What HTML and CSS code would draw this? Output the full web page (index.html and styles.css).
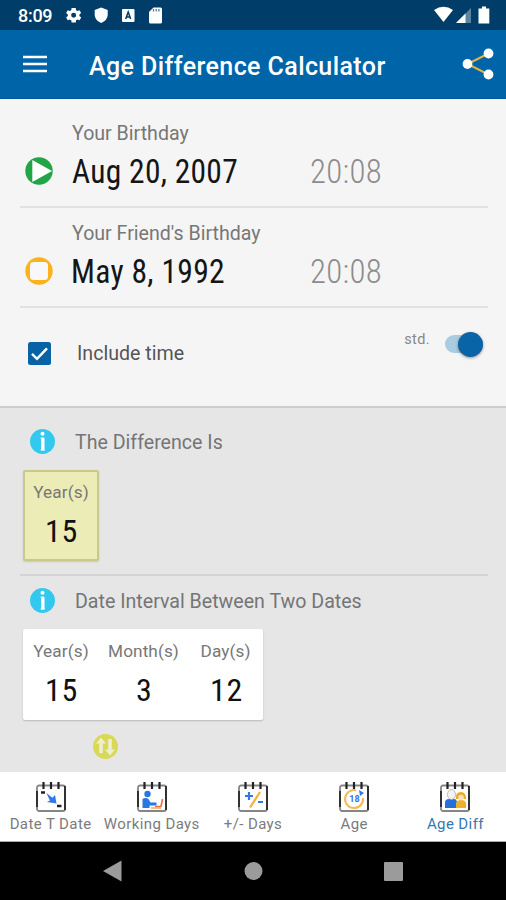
FILE: index.html
```html
<!DOCTYPE html>
<html lang="en">
<head>
<meta charset="utf-8">
<title>Age Difference Calculator</title>
<link rel="stylesheet" href="styles.css">
</head>
<body>
<svg width="0" height="0" class="defs" aria-hidden="true">
  <symbol id="calendar" viewBox="0 0 32 32">
    <rect x="2" y="4.500" width="28" height="25.500" rx="2" fill="#fff" stroke="#858585" stroke-width="1.800"/>
    <path d="M30 5v24M2 10v16" stroke="#222" stroke-width="1.700"/>
    <path d="M8.500 1v7M16 1v7M23.500 1v7" stroke="#222" stroke-width="2.200"/>
  </symbol>
  <symbol id="info" viewBox="0 0 25 25">
    <circle cx="12.500" cy="12.500" r="12.500" fill="#33c9ee"/>
    <circle cx="12.500" cy="4.800" r="2" fill="#fff"/>
    <path d="M10.500 9.200h3.500v11.800M10.500 21h4.500" fill="none" stroke="#d5f3fa" stroke-width="1"/>
    <path d="M12.700 8.700v12.800" stroke="#fff" stroke-width="3"/>
  </symbol>
</svg>
<header>
  <div class="status">
    <span class="clock">8:09</span>
    <svg width="102" height="20" viewBox="0 0 102 20" fill="#fff">
      <g transform="translate(-1.700 .3) scale(.83)"><path d="M19.400 13a7.500 7.500 0 0 0 0-2l2.100-1.600-2-3.500-2.500 1a7.300 7.300 0 0 0-1.700-1L15 3.200h-5l-.4 2.700a7.300 7.300 0 0 0-1.700 1l-2.500-1-2 3.500L5.500 11a7.500 7.500 0 0 0 0 2l-2.100 1.600 2 3.500 2.500-1a7.300 7.300 0 0 0 1.700 1l.4 2.700h5l.4-2.700a7.300 7.300 0 0 0 1.700-1l2.500 1 2-3.500zM12.500 15a3 3 0 1 1 0-6 3 3 0 0 1 0 6z"/></g>
      <path d="M36.200 2.500l6.500 2.600v4.400c0 4-2.700 7-6.500 8.500-3.800-1.500-6.500-4.500-6.500-8.500V5.100z"/>
      <rect x="57" y="4" width="12.500" height="13" rx="1"/>
      <path d="M60.700 14l2.500-7 2.500 7M61.700 12h3" fill="none" stroke="#003d69" stroke-width="1.500"/>
      <path d="M88.500 2.500h7q1.500 0 1.500 1.500v13q0 1.500-1.500 1.500h-10q-1.500 0-1.500-1.500V7z"/>
      <path d="M88.500 4v2.500M91.200 4v2.500M93.900 4v2.500" stroke="#48708f" stroke-width="1.200"/>
    </svg>
    <svg class="signals" width="62" height="20" viewBox="0 0 62 20" fill="#fff">
      <path d="M-3 5Q6.500-1.500 16 5L6.500 17z"/>
      <path d="M19 18L34 3v15z" fill="#5d849f"/><path d="M19 18L28.500 8.500V18z"/>
      <path d="M45 1.500h4v2h3.300V18.500h-10.800V3.500h3.500z"/>
    </svg>
  </div>
  <div class="appbar">
    <svg width="24" height="18" viewBox="0 0 24 18"><path d="M0 2h24M0 9h24M0 16h24" stroke="#fff" stroke-width="2.600"/></svg>
    <h1>Age Difference Calculator</h1>
    <svg class="share" width="32" height="32" viewBox="0 0 32 32"><path d="M26.500 5.500L5.500 16l21 10.500" fill="none" stroke="#e5b344" stroke-width="2"/><g fill="#fff"><circle cx="26.500" cy="5.500" r="4.900"/><circle cx="5.500" cy="16" r="4.900"/><circle cx="26.500" cy="26.500" r="4.900"/></g></svg>
  </div>
</header>
<main>
  <section class="inputs">
    <div class="date-row">
      <svg class="marker" width="28" height="28" viewBox="0 0 28 28"><circle cx="14" cy="14" r="13.700" fill="#21a547"/><path d="M7.300 3v22L27 14z" fill="#fff"/></svg>
      <div class="fields">
        <p class="label">Your Birthday</p>
        <svg class="values" width="340" height="40"><text x="0" y="32" textLength="166" lengthAdjust="spacingAndGlyphs">Aug 20, 2007</text><text class="time" x="238" y="32" textLength="72" lengthAdjust="spacingAndGlyphs">20:08</text></svg>
      </div>
    </div>
    <div class="date-row">
      <svg class="marker" width="28" height="28" viewBox="0 0 28 28"><circle cx="14" cy="14" r="13.700" fill="#fbb31b"/><rect x="5" y="5" width="18" height="18" rx="3.500" fill="#f8f8fa"/></svg>
      <div class="fields">
        <p class="label">Your Friend's Birthday</p>
        <svg class="values" width="340" height="40"><text x="-1" y="32" textLength="154" lengthAdjust="spacingAndGlyphs">May 8, 1992</text><text class="time" x="238" y="32" textLength="72" lengthAdjust="spacingAndGlyphs">20:08</text></svg>
      </div>
    </div>
    <div class="options">
      <svg width="23" height="23" viewBox="0 0 23 23"><rect width="23" height="23" rx="2.500" fill="#0962a4"/><path d="M4 11.800l5 5L19 6.300" fill="none" stroke="#fff" stroke-width="2.500"/></svg>
      <span class="include">Include time</span>
      <span class="std">std.</span>
      <span class="switch"><i></i></span>
    </div>
  </section>
  <section class="results">
    <div class="heading"><svg width="25" height="25"><use href="#info"/></svg><h2>The Difference Is</h2></div>
    <div class="card highlight">
      <div class="unit"><span>Year(s)</span><svg width="60" height="40"><text x="14" y="34" textLength="33" lengthAdjust="spacingAndGlyphs">15</text></svg></div>
    </div>
    <div class="divider"></div>
    <div class="heading second"><svg width="25" height="25"><use href="#info"/></svg><h2>Date Interval Between Two Dates</h2></div>
    <div class="card">
      <div class="unit"><span>Year(s)</span><svg width="60" height="40"><text x="14" y="34" textLength="33" lengthAdjust="spacingAndGlyphs">15</text></svg></div>
      <div class="unit"><span>Month(s)</span><svg width="60" height="40"><text x="22" y="34" textLength="16.500" lengthAdjust="spacingAndGlyphs">3</text></svg></div>
      <div class="unit"><span>Day(s)</span><svg width="60" height="40"><text x="14" y="34" textLength="33" lengthAdjust="spacingAndGlyphs">12</text></svg></div>
    </div>
    <svg class="swap" width="25" height="25" viewBox="0 0 25 25"><circle cx="12.500" cy="12.500" r="12.500" fill="#d8d956"/><path d="M8 3.500l5 6H9.800V19H6.200V9.500H3zM17 21.500l-5-6h3.200V5h3.600v10.500H22z" fill="#eeeed0"/></svg>
  </section>
</main>
<nav class="tabs">
  <a><svg width="32" height="32" viewBox="0 0 32 32"><use href="#calendar"/><path d="M6 11.500h4M22 25h4.500" stroke="#222" stroke-width="2.500"/><path d="M21.500 22.500l-1.500-8.500-2.600 2.700-6-4.700 3.500 7.500-3 1.500z" fill="#2e78ea"/></svg><span>Date T Date</span></a>
  <a><svg width="32" height="32" viewBox="0 0 32 32"><use href="#calendar"/><circle cx="11.500" cy="13" r="3.200" fill="#2878e4"/><path d="M6.500 18q3-2 6 0l2 3.500h6v3h-7v2.500h-7z" fill="#2878e4"/><path d="M19 25.500h6l1.500-7.500" fill="none" stroke="#ef6b43" stroke-width="1.600"/><path d="M15 27h10" stroke="#f5ad52" stroke-width="1.500"/></svg><span>Working Days</span></a>
  <a><svg width="32" height="32" viewBox="0 0 32 32"><use href="#calendar"/><path d="M8 15h8M12 11v8M21 21h5" stroke="#3676e8" stroke-width="2.200"/><path d="M13 26.500L23 11" stroke="#f6b13f" stroke-width="2.300"/></svg><span>+/- Days</span></a>
  <a><svg width="32" height="32" viewBox="0 0 32 32"><use href="#calendar"/><path d="M18 9.300A9 9 0 1 0 25 17" fill="none" stroke="#f7b84f" stroke-width="2"/><path d="M21 9l5 3-4 3z" fill="#3676e8"/><text class="eighteen" x="16.500" y="21" text-anchor="middle">18</text></svg><span>Age</span></a>
  <a class="active"><svg width="32" height="32" viewBox="0 0 32 32"><use href="#calendar"/><path d="M6 27v-5q0-4 4-4h5q3 0 3 4v5z" fill="#246fd9"/><path d="M17 27v-5q1-3 5-3 5 0 5 4v4z" fill="#edb12b"/><path d="M17 18q-1-7 5-7 5 0 5 7z" fill="#edaa25"/><circle cx="22" cy="16.500" r="2.800" fill="#f7e3be"/><ellipse cx="12.500" cy="13.500" rx="4" ry="5" fill="#f3f3f3" stroke="#aaa" stroke-width=".8"/></svg><span>Age Diff</span></a>
</nav>
<footer>
  <svg width="506" height="58" viewBox="0 0 506 58" fill="#9b9b9b"><path d="M103 29l18.500-10.500v21z"/><circle cx="253.500" cy="29" r="9"/><rect x="384" y="20" width="19" height="19" rx="1"/></svg>
</footer>
</body>
</html>
```

FILE: styles.css
```css
* { box-sizing: border-box; }
body { margin: 0; width: 506px; height: 900px; overflow: hidden; font-family: Roboto, "Liberation Sans", sans-serif; display: flex; flex-direction: column; }
h1, h2, p { margin: 0; font-weight: 400; }
svg { display: block; flex: none; overflow: visible; }
.defs { position: absolute; }
.status { height: 30px; background: #003e69; display: flex; align-items: center; padding: 0 7px 0 18px; color: #fff; }
.clock { font-size: 18px; font-weight: 500; width: 47px; letter-spacing: -.3px; padding-top: 1px; }
.signals { margin-left: auto; }
.appbar { height: 69px; background: #0065a8; border-bottom: 1px solid #00539c; display: flex; align-items: center; padding: 0 12px 0 23px; }
h1 { color: #fff; font-size: 25px; font-weight: 500; margin-left: 42px; padding-top: 4px; white-space: nowrap; letter-spacing: .41px; }
.share { margin-left: auto; }
main { height: 673px; display: flex; flex-direction: column; }
.inputs { height: 309px; background: #f5f5f5; padding: 9px 18px 0 20px; border-bottom: 2px solid #cdcdcd; }
.date-row { height: 100px; border-bottom: 2px solid #e2e2e2; display: flex; padding-left: 5px; }
.marker { margin-top: 49px; }
.fields { margin-left: 19px; padding-top: 14px; }
.label { height: 29px; line-height: 24px; font-size: 19.600px; color: #777; white-space: nowrap; }
.values text { font-family: "Roboto Condensed", Roboto, sans-serif; font-stretch: 75%; letter-spacing: .3px; font-size: 32.500px; fill: #151515; }
.values .time { fill: #8c8c8c; font-weight: 300; }
.options { display: flex; padding: 34px 4px 0 8px; color: #555; }
.include { font-size: 19.600px; line-height: 24px; margin-left: 26px; }
.std { margin-left: auto; font-size: 14.500px; line-height: 20px; color: #888; margin-top: -12px; letter-spacing: .4px; }
.switch { width: 38px; height: 18px; border-radius: 9px; background: #aacbe0; margin: -7px 1px 0 15px; display: flex; justify-content: flex-end; align-items: center; }
.switch i { width: 25px; height: 25px; flex: none; border-radius: 50%; background: #0864a6; box-shadow: 0 1px 3px #0006; }
.results { flex: 1; background: #e6e6e6; padding: 21px 18px 0 20px; }
.heading { display: flex; align-items: center; height: 25px; padding-left: 10px; color: #757575; }
h2 { font-size: 19.600px; margin-left: 20px; white-space: nowrap; padding-top: 2px; }
.card { width: max-content; height: 91px; margin: 16px 0 0 3px; padding: 0 1px; background: #fff; border-radius: 2px; box-shadow: 0 1px 2px #0003; display: flex; }
.unit { width: 74px; padding-top: 11px; display: flex; flex-direction: column; align-items: center; gap: 5px; }
.unit:nth-child(2) { width: 91px; }
.unit:nth-child(3) { width: 73px; }
.unit span { font-size: 17.200px; line-height: 22px; color: #777; letter-spacing: .1px; white-space: nowrap; }
.unit text { font-family: "Roboto Condensed", Roboto, sans-serif; font-stretch: 75%; letter-spacing: .7px; font-size: 32px; fill: #111; }
.highlight { background: #ececb7; box-shadow: inset 0 0 0 2px #c9c98b, 0 1px 2px #0002; }
.divider { height: 2px; background: #d4d4d4; margin-top: 13px; }
.second { margin-top: 12px; }
.swap { margin: 14px 0 0 73px; }
.tabs { height: 70px; background: #fff; display: grid; grid-template-columns: repeat(5, 1fr); border-bottom: 1px solid #aaa; }
.tabs a { display: flex; flex-direction: column; align-items: center; padding-top: 9px; color: #7b7b7b; font-size: 15px; line-height: 18px; letter-spacing: .4px; white-space: nowrap; gap: 2px; }
.tabs .active { color: #3478b0; }
.eighteen { font-size: 9px; font-weight: 700; letter-spacing: 0; fill: #3676e8; }
footer { height: 58px; background: #000; }
```
